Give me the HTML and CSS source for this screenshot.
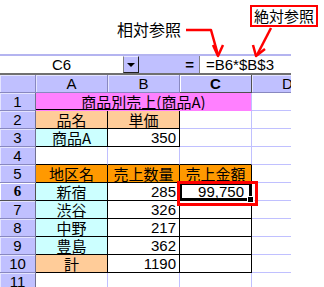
FILE: index.html
```html
<!DOCTYPE html>
<html lang="ja">

<head>
    <meta charset="UTF-8">
    <meta name="viewport" content="width=device-width, initial-scale=1.0">
    <title>相対参照と絶対参照</title>
    <link rel="stylesheet" href="styles.css">
</head>

<body>
    <div class="page">
        <div class="notes">
            <span class="rel">相対参照</span>
            <span class="abs">絶対参照</span>
        </div>

        <div class="fbar">
            <div class="namebox">C6</div>
            <div class="ddbtn"><span class="tri"></span></div>
            <div class="eq">=</div>
            <div class="formula">=B6*$B$3</div>
        </div>

        <div class="sheet">
            <div class="hd corner"></div>
            <div class="hd">A</div>
            <div class="hd">B</div>
            <div class="hd sel">C</div>
            <div class="hd">D</div>

            <div class="rh">1</div>
            <div class="c title">商品別売上(商品A)</div>
            <div class="c"></div>

            <div class="rh">2</div>
            <div class="c peach ctr kb kr">品名</div>
            <div class="c peach ctr kb kr">単価</div>
            <div class="c"></div>
            <div class="c"></div>

            <div class="rh">3</div>
            <div class="c cyan ctr kb kr">商品A</div>
            <div class="c num kb kr">350</div>
            <div class="c"></div>
            <div class="c"></div>

            <div class="rh">4</div>
            <div class="c kb"></div>
            <div class="c kb"></div>
            <div class="c kb"></div>
            <div class="c"></div>

            <div class="rh">5</div>
            <div class="c orange ctr kb kr">地区名</div>
            <div class="c orange ctr kb kr">売上数量</div>
            <div class="c orange ctr kb kr">売上金額</div>
            <div class="c"></div>

            <div class="rh rsel">6</div>
            <div class="c cyan ctr kb kr">新宿</div>
            <div class="c num kb kr">285</div>
            <div class="c num kb kr active">99,750</div>
            <div class="c"></div>

            <div class="rh">7</div>
            <div class="c cyan ctr kb kr">渋谷</div>
            <div class="c num kb kr">326</div>
            <div class="c kb kr"></div>
            <div class="c"></div>

            <div class="rh">8</div>
            <div class="c cyan ctr kb kr">中野</div>
            <div class="c num kb kr">217</div>
            <div class="c kb kr"></div>
            <div class="c"></div>

            <div class="rh">9</div>
            <div class="c cyan ctr kb kr">豊島</div>
            <div class="c num kb kr">362</div>
            <div class="c kb kr"></div>
            <div class="c"></div>

            <div class="rh">10</div>
            <div class="c peach ctr kb kr">計</div>
            <div class="c num kb kr">1190</div>
            <div class="c kb kr"></div>
            <div class="c"></div>

            <div class="rh">11</div>
            <div class="c"></div>
            <div class="c"></div>
            <div class="c"></div>
            <div class="c"></div>
        </div>

        <!-- annotations drawn over the sheet -->
        <div class="mark"></div>
        <svg class="arrows" width="324" height="287" viewBox="0 0 324 287">
            <g fill="none" stroke="#f00" stroke-width="2.5" stroke-linejoin="round">
                <polyline points="186,30 211,30 218,55" />
                <polyline points="213,45 218,56 223,45" />
                <line x1="271" y1="28" x2="257" y2="55" />
                <polyline points="253,45 256,56 265,49" />
            </g>
        </svg>
    </div>
</body>

</html>
```

FILE: styles.css
```css
body {
    margin: 0;
    background-color: #fff;
    font-family: "Liberation Sans", "Noto Sans CJK JP", sans-serif;
    color: #000;
}

.page {
    position: relative;
    width: 324px;
    height: 287px;
    overflow: hidden;
}

/* callout labels */
.notes {
    display: flex;
    align-items: flex-start;
    height: 54px;
    font-family: "Noto Sans CJK JP", sans-serif;
}
.rel {
    margin: 20px 0 0 117px;
    font-size: 16px;
    line-height: 18px;
}
.abs {
    margin: 5px 0 0 69px;
    font-size: 15px;
    line-height: 18px;
    padding: 0 2px;
    border: 2px solid #f00;
}

/* formula bar */
.fbar {
    display: flex;
    width: 291px;
    height: 21px;
    box-sizing: border-box;
    border-top: 2px solid #b4b4f0;
    border-bottom: 2px solid #707070;
    background-color: #c0c0ff;
    font-size: 15px;
    line-height: 17px;
}
.namebox {
    width: 123px;
    background-color: #fff;
    text-align: center;
}
.ddbtn {
    width: 16px;
    box-sizing: border-box;
    border: 1px solid;
    border-color: #e8e8ff #202020 #202020 #808080;
    display: flex;
    justify-content: center;
    align-items: center;
}
.tri {
    width: 0;
    height: 0;
    border-left: 4px solid transparent;
    border-right: 4px solid transparent;
    border-top: 4px solid #000;
}
.eq {
    width: 60px;
    box-sizing: border-box;
    padding-right: 5px;
    text-align: right;
    font-weight: bold;
}
.formula {
    flex: 1;
    background-color: #fff;
    border-left: 1px solid #808080;
    padding-left: 6px;
}

/* sheet */
.sheet {
    display: grid;
    grid-template-columns: 36px 72px 72px 72px 72px;
    grid-auto-rows: 18px;
    width: 291px;
    overflow: hidden;
    font-size: 15px;
}
.sheet>div {
    box-sizing: border-box;
    line-height: 17px;
    white-space: nowrap;
    overflow: hidden;
}
.c {
    border-right: 1px solid #c0c0ff;
    border-bottom: 1px solid #c0c0ff;
    font-family: "Liberation Sans", "Noto Sans CJK JP", sans-serif;
}
.hd,
.rh {
    background-color: #c0c0ff;
    text-align: center;
    border-right: 1px solid #8888c0;
    border-bottom: 1px solid #8888c0;
    box-shadow: inset 1px 1px #e4e4ff;
}
.rh {
    border-right-color: #707090;
}
.sel,
.rsel {
    font-weight: bold;
    border-right-color: #505050;
    border-bottom-color: #505050;
    box-shadow: inset 1px 1px #fff;
}
.rsel {
    font-family: "Liberation Serif", serif;
}

.title {
    grid-column: span 3;
    text-align: center;
    border-bottom-color: transparent;
    background: linear-gradient(#000, #000) left bottom / 144px 1px no-repeat, #ff80ff;
    font-family: "Noto Sans CJK JP", sans-serif;
}
.peach {
    background-color: #ffcc99;
}
.cyan {
    background-color: #ccffff;
}
.orange {
    background-color: #ff9900;
}
.ctr {
    text-align: center;
    font-family: "Noto Sans CJK JP", sans-serif;
}
.num {
    text-align: right;
    padding-right: 3px;
}
.kb {
    border-bottom-color: #000;
}
.kr {
    border-right-color: #000;
}
.active {
    position: relative;
    padding-right: 7px;
    box-shadow: inset 0 0 0 2px #000;
    overflow: visible !important;
}
.active::after {
    content: "";
    position: absolute;
    right: -3px;
    bottom: -3px;
    width: 5px;
    height: 5px;
    background-color: #000;
    border: 1px solid #fff;
}

.mark {
    position: absolute;
    left: 177px;
    top: 181px;
    width: 81px;
    height: 25px;
    box-sizing: border-box;
    border: 3px solid #f00;
}
.arrows {
    position: absolute;
    left: 0;
    top: 0;
    pointer-events: none;
}
```
